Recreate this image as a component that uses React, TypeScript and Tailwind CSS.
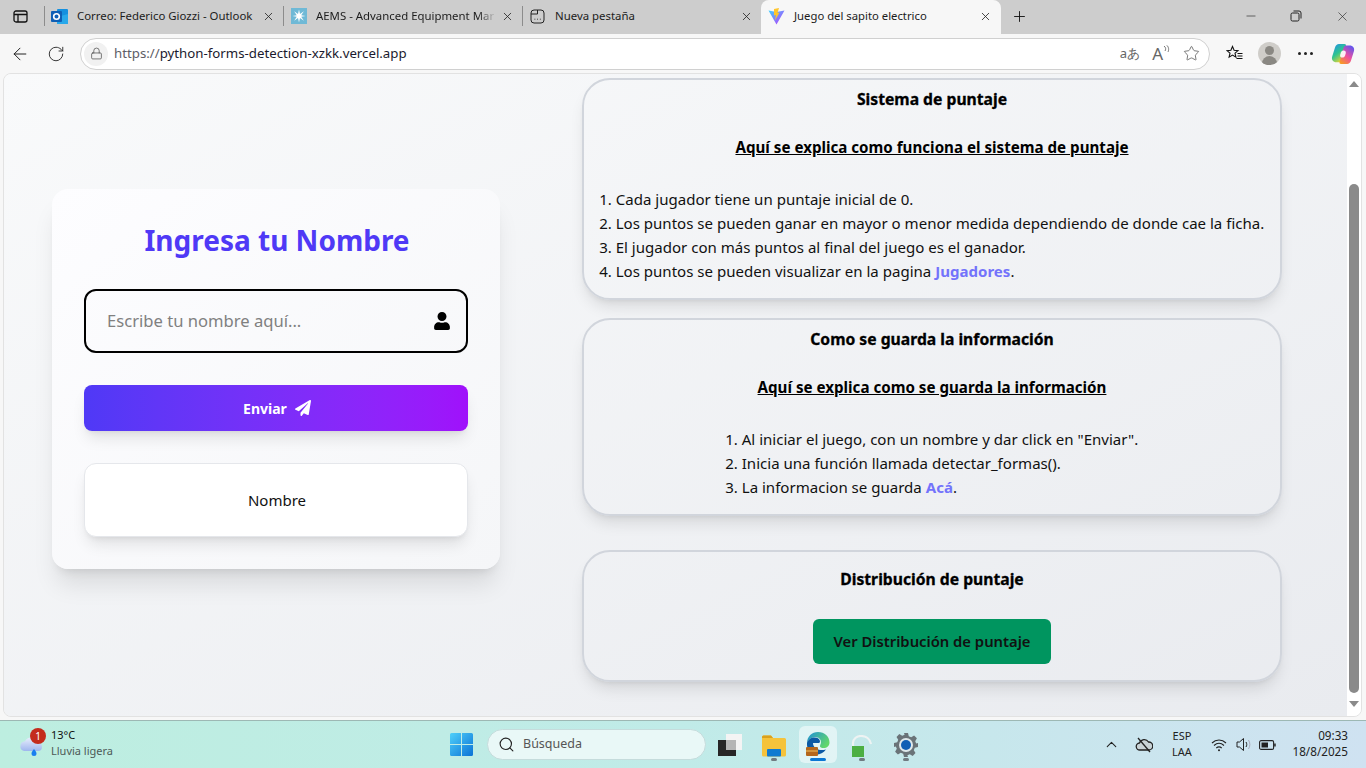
import { ArrowLeft, ChevronUp, Lock, Minus, Plus, RotateCw, Search, Star, X } from "lucide-react";
import { FaPaperPlane, FaUser } from "react-icons/fa";

function OutlookIcon() {
  return (
    <svg width="17" height="17" viewBox="0 0 17 17" className="shrink-0">
      <rect x="6" y="1" width="11" height="15" rx="1" fill="#1490df" />
      <path d="M6 9l11-3v10H6z" fill="#28a8ea" />
      <rect x="0" y="3" width="11" height="11" rx="1" fill="#0f5fb5" />
      <circle cx="5.5" cy="8.5" r="2.8" fill="none" stroke="#fff" strokeWidth="1.6" />
    </svg>
  );
}

function AemsIcon() {
  return (
    <svg width="16" height="16" viewBox="0 0 16 16" className="shrink-0">
      <rect width="16" height="16" fill="#6fb9d6" />
      <path d="M8 1.5l1 4.6 3.9-2.8-2.7 3.9 4.3.8-4.3.8 2.7 3.9L9 9.9l-1 4.6-1-4.6-3.9 2.8 2.7-3.9-4.3-.8 4.3-.8-2.7-3.9L7 6.1z" fill="#fff" />
    </svg>
  );
}

function NewTabIcon() {
  return (
    <svg width="15" height="15" viewBox="0 0 15 15" fill="none" stroke="#222" strokeWidth="1" className="shrink-0">
      <rect x="1" y="1" width="13" height="13" rx="3" />
      <path d="M1 5h6.5V1M4.5 10.2h.8M7.2 10.2h.8M9.900 10.2h.8" />
    </svg>
  );
}

function ViteIcon() {
  return (
    <svg width="17" height="17" viewBox="0 0 17 17" className="shrink-0">
      <defs>
        <linearGradient id="viteTri" x1="0" y1="0" x2="1" y2="1">
          <stop offset="0" stopColor="#41d1ff" />
          <stop offset="1" stopColor="#bd34fe" />
        </linearGradient>
      </defs>
      <path d="M0.5 2.5L8.5 4l8-1.500-8 14z" fill="url(#viteTri)" />
      <path d="M6 1l5-1-1.500 5 2-.5-4.500 8 1-5.500-2 .4z" fill="#ffc62e" />
    </svg>
  );
}

function Tab({ icon, title, fade }: { icon: React.ReactNode; title: string; fade?: boolean }) {
  return (
    <div className="flex h-full w-[238px] shrink-0 items-center pb-[2px] pl-[6px] pr-[8px]">
      <div className="flex w-[17px] shrink-0 justify-center">{icon}</div>
      <span
        className={`ml-[9px] min-w-0 flex-1 whitespace-nowrap text-[11.400px] text-[#1c1c1c] ${
          fade ? "[mask-image:linear-gradient(90deg,#000_90%,transparent)]" : ""
        }`}
      >
        {title}
      </span>
      <X size={13} strokeWidth={1.5} className="ml-[5px] shrink-0 text-[#222]" />
    </div>
  );
}

function Separator() {
  return <div className="-mt-[2px] h-[20px] w-px shrink-0 bg-[#8c8c8c]" />;
}

function TabBar() {
  return (
    <div className="flex h-[34px] shrink-0 items-center bg-[#cdcdcd] pl-[13px]">
      <svg width="15" height="15" viewBox="0 0 15 15" fill="none" stroke="#111" strokeWidth="1.300" className="-mt-[2px] mr-[16px] shrink-0">
        <rect x="1" y="2" width="13" height="11" rx="2" />
        <path d="M1 5.500h13M5 5.500V13" />
      </svg>
      <Separator />
      <Tab icon={<OutlookIcon />} title="Correo: Federico Giozzi - Outlook" />
      <Separator />
      <Tab icon={<AemsIcon />} title="AEMS - Advanced Equipment Mar" fade />
      <Separator />
      <Tab icon={<NewTabIcon />} title="Nueva pestaña" />
      <div className="flex h-full w-[240px] shrink-0 items-center rounded-t-lg bg-[#f7f7f7] pb-[2px] pl-[7px] pr-[9px]">
        <ViteIcon />
        <span className="ml-[9px] whitespace-nowrap text-[11.300px] text-[#1c1c1c]">Juego del sapito electrico</span>
        <X size={13} strokeWidth={1.5} className="ml-auto shrink-0 text-[#222]" />
      </div>
      <Plus size={17} strokeWidth={1.3} className="-mt-[2px] ml-[10px] shrink-0 text-[#111]" />
      <div className="-mt-[2px] ml-auto flex items-center">
        <Minus size={14} strokeWidth={1.1} className="text-[#222]" />
        <svg width="12" height="12" viewBox="0 0 12 12" fill="none" stroke="#222" className="ml-[32px]">
          <rect x="1" y="3" width="8" height="8" rx="1.5" />
          <path d="M3.500 1h5.500a2 2 0 0 1 2 2v5.500" />
        </svg>
        <X size={15} strokeWidth={1} className="ml-[33px] mr-[16px] text-[#222]" />
      </div>
    </div>
  );
}

function CopilotIcon() {
  return (
    <svg width="24" height="24" viewBox="0 0 24 24">
      <defs>
        <linearGradient id="copA" x1="0" y1="0" x2="0.6" y2="1">
          <stop offset="0" stopColor="#1f8cf0" />
          <stop offset="0.55" stopColor="#2fc48f" />
          <stop offset="1" stopColor="#e8d534" />
        </linearGradient>
        <linearGradient id="copB" x1="0.2" y1="1" x2="0.8" y2="0">
          <stop offset="0" stopColor="#f79a25" />
          <stop offset="0.45" stopColor="#ee4f9f" />
          <stop offset="1" stopColor="#5e55ef" />
        </linearGradient>
      </defs>
      <path d="M8 2h5.500c1.200 0 1.800.8 1.400 2L11.500 18c-.4 1.500-1.400 2.200-2.800 2.200H5.500C2 20.200.2 17.600 1.200 14.400L4 5.500C4.700 3.300 6 2 8 2z" fill="url(#copA)" />
      <path d="M15 3.500h3.500c3.500 0 5.400 2.600 4.400 5.800L20 18.500c-.7 2.200-2 3.500-4 3.500H10c-1.200 0-1.800-.8-1.400-2L12.500 6c.4-1.600 1.200-2.500 2.500-2.500z" fill="url(#copB)" />
      <path d="M12.500 8.500c1.800 0 2.700 1.200 2.200 2.900l-.7 2.300c-.4 1.100-1.300 1.900-2.600 1.900-1.800 0-2.700-1.200-2.200-2.900l.7-2.300c.4-1.100 1.300-1.900 2.600-1.900z" fill="#fff" opacity="0.9" />
    </svg>
  );
}

function Toolbar() {
  return (
    <div className="flex h-[39px] shrink-0 items-center bg-[#f7f7f7] pl-[10px]">
      <ArrowLeft size={20} strokeWidth={1.2} className="shrink-0 text-[#222]" />
      <RotateCw size={18} strokeWidth={1.2} className="ml-[17px] shrink-0 text-[#222]" />
      <div className="ml-[15px] flex h-[32px] w-[1130px] shrink-0 items-center rounded-full border border-[#d0d0d0] bg-white pl-[3px] pr-[9px]">
        <div className="flex h-[24px] w-[24px] items-center justify-center rounded-full bg-[#f1f1f1]">
          <Lock size={13} strokeWidth={1.3} className="text-[#444]" />
        </div>
        <span className="ml-[6px] pt-[1px] text-[13.250px] text-[#1a1a2e]">
          <span className="text-[#5d5d66]">https://</span>python-forms-detection-xzkk.vercel.app
        </span>
        <span className="ml-auto text-[13px] text-[#666]">aあ</span>
        <span className="ml-[12px] flex items-start text-[17px] leading-none text-[#666]">
          A
          <svg width="7" height="10" viewBox="0 0 7 10" fill="none" stroke="#666" strokeWidth="0.9">
            <path d="M1 1c2 1.500 2 3.500 1 5M3.500 0c2.500 2 2.500 5 1.500 7" />
          </svg>
        </span>
        <Star size={17} strokeWidth={1.1} className="ml-[13px] text-[#555]" />
      </div>
      <svg width="18" height="18" viewBox="0 0 18 18" fill="none" stroke="#111" strokeWidth="1.100" className="ml-[16px] shrink-0">
        <path d="M6.500 1.500l1.600 3.700 3.900.4-3 2.600.9 3.900-3.400-2-3.400 2 .9-3.900-3-2.600 3.900-.4z" />
        <path d="M11.500 8.500h5M11.500 11h5M10.500 13.500h6" />
      </svg>
      <div className="ml-[14px] flex h-[23px] w-[23px] shrink-0 flex-col items-center overflow-hidden rounded-full bg-[#cfcdc9]">
        <div className="mt-[4px] h-[9px] w-[9px] rounded-full bg-[#8a8883]" />
        <div className="mt-[1px] h-[10px] w-[15px] rounded-t-full bg-[#8a8883]" />
      </div>
      <div className="ml-[17px] flex shrink-0 gap-[3px]">
        <div className="h-[3px] w-[3px] rounded-full bg-[#222]" />
        <div className="h-[3px] w-[3px] rounded-full bg-[#222]" />
        <div className="h-[3px] w-[3px] rounded-full bg-[#222]" />
      </div>
      <div className="ml-[18px] shrink-0">
        <CopilotIcon />
      </div>
    </div>
  );
}

function InfoCard({ title, subtitle, children }: { title: string; subtitle: string; children: React.ReactNode }) {
  return (
    <section className="flex flex-col items-center rounded-[28px] border-2 border-[#d1d5dc] px-3 pb-[15px] pt-[7px] shadow-lg">
      <h3 className="text-[15.700px] font-bold leading-6 text-black [-webkit-text-stroke:0.3px_#000]">{title}</h3>
      <h4 className="mt-6 text-[15.150px] font-bold leading-6 text-black underline">{subtitle}</h4>
      <ol className="mt-7 list-decimal pl-4 text-[15.050px] leading-6 text-[#111]">{children}</ol>
    </section>
  );
}

function LoginCard() {
  return (
    <div className="flex h-[380px] w-[448px] shrink-0 flex-col rounded-2xl bg-gradient-to-br from-[#fdfdff] to-[#f5f6f8] p-8 shadow-xl">
      <h2 className="mt-[1px] pl-[2px] text-center text-[28px] font-bold leading-9 text-[#4f39f6]">Ingresa tu Nombre</h2>
      <div className="mt-[31px] flex h-[64px] items-center rounded-xl border-2 border-black pl-[21px] pr-[15px]">
        <span className="text-[16.600px] text-[#808080]">Escribe tu nombre aquí...</span>
        <FaUser size={18} className="ml-auto text-black" />
      </div>
      <button className="mt-8 flex h-[46px] items-center justify-center gap-2 rounded-lg bg-gradient-to-r from-[#4f39f6] to-[#a010fb] pl-[2px] text-[14px] font-bold text-white shadow-lg">
        Enviar
        <FaPaperPlane size={16} />
      </button>
      <div className="mt-8 flex h-[74px] items-center justify-center rounded-xl border border-[#e5e7eb] bg-white pl-[2px] text-[15px] text-[#111] shadow-lg">
        Nombre
      </div>
    </div>
  );
}

function Scrollbar() {
  return (
    <div className="flex w-[14px] shrink-0 flex-col items-center bg-white">
      <div className="mt-[7px] h-0 w-0 border-x-[5px] border-b-[6px] border-x-transparent border-b-[#8a8a8a]" />
      <div className="mt-[97px] h-[509px] w-[10px] rounded-full bg-[#8a8a8a]" />
      <div className="mt-[8px] h-0 w-0 border-x-[5px] border-t-[6px] border-x-transparent border-t-[#8a8a8a]" />
    </div>
  );
}

function Page() {
  return (
    <div className="flex h-[647px] shrink-0 bg-[#f7f7f7] pb-[3px] pl-[3px] pr-[4px]">
      <div className="flex min-w-0 flex-1 overflow-hidden rounded-lg border border-[#e2e2e2]">
        <main className="flex min-w-0 flex-1 items-start bg-gradient-to-br from-[#f9fafb] to-[#e9ebef] pl-[48px]">
          <div className="mt-[115px] shrink-0">
            <LoginCard />
          </div>
          <div className="ml-[82px] mt-[4px] flex w-[700px] shrink-0 flex-col">
            <InfoCard title="Sistema de puntaje" subtitle="Aquí se explica como funciona el sistema de puntaje">
              <li>Cada jugador tiene un puntaje inicial de 0.</li>
              <li>Los puntos se pueden ganar en mayor o menor medida dependiendo de donde cae la ficha.</li>
              <li>El jugador con más puntos al final del juego es el ganador.</li>
              <li>
                Los puntos se pueden visualizar en la pagina <b className="font-bold text-[#7373fb]">Jugadores</b>.
              </li>
            </InfoCard>
            <div className="mt-[18px]">
              <InfoCard title="Como se guarda la información" subtitle="Aquí se explica como se guarda la información">
                <li>Al iniciar el juego, con un nombre y dar click en "Enviar".</li>
                <li>Inicia una función llamada detectar_formas().</li>
                <li>
                  La informacion se guarda <b className="font-bold text-[#7373fb]">Acá</b>.
                </li>
              </InfoCard>
            </div>
            <section className="mt-[34px] flex h-[132px] flex-col items-center rounded-[28px] border-2 border-[#d1d5dc] pt-[15px] shadow-lg">
              <h3 className="text-[15.700px] font-bold leading-6 text-black [-webkit-text-stroke:0.3px_#000]">Distribución de puntaje</h3>
              <button className="mt-[28px] h-[45px] w-[238px] rounded-md bg-[#00955f] text-[14.800px] font-semibold text-[#111]">
                Ver Distribución de puntaje
              </button>
            </section>
          </div>
        </main>
        <Scrollbar />
      </div>
    </div>
  );
}

function WeatherIcon() {
  return (
    <div className="relative h-[30px] w-[30px] shrink-0">
      <svg width="26" height="24" viewBox="0 0 26 24" className="absolute left-0 top-[5px]">
        <defs>
          <linearGradient id="cloud" x1="0" y1="0" x2="0" y2="1">
            <stop offset="0" stopColor="#e8eefc" />
            <stop offset="1" stopColor="#9fb6ee" />
          </linearGradient>
        </defs>
        <path d="M6 16a5 5 0 0 1 1-9.800 7 7 0 0 1 13 1.800 4 4 0 0 1 0 8z" fill="url(#cloud)" />
        <path d="M16 14c1.500 2 2.500 3.200 2.500 4.500a2.500 2.500 0 0 1-5 0c0-1.300 1-2.500 2.500-4.500z" fill="#1a7ff0" />
      </svg>
      <div className="absolute left-[12px] top-[-2px] flex h-[16px] w-[16px] items-center justify-center rounded-full bg-[#c42b1c] text-[10px] leading-none text-white">
        1
      </div>
    </div>
  );
}

function TaskDot() {
  return <div className="mx-auto mt-[1px] h-[3px] w-[6px] rounded-full bg-[#707a80]" />;
}

function Taskbar() {
  return (
    <div className="flex h-[48px] shrink-0 items-center border-t border-[#9db8b4] bg-gradient-to-r from-[#bdeee0] via-[#c0ebe8] to-[#cfe2f1] pl-[18px]">
      <WeatherIcon />
      <div className="-mt-[3px] ml-[3px] w-[70px] shrink-0 text-[11px] leading-[16px]">
        <div className="text-[#111]">13°C</div>
        <div className="whitespace-nowrap text-[#4d5a58]">Lluvia ligera</div>
      </div>
      <svg width="23" height="23" viewBox="0 0 23 23" className="ml-[329px] shrink-0">
        <defs>
          <linearGradient id="win" x1="0" y1="0" x2="1" y2="1">
            <stop offset="0" stopColor="#4fd0fa" />
            <stop offset="1" stopColor="#0a72d6" />
          </linearGradient>
        </defs>
        <path d="M0 1.500A1.500 1.500 0 0 1 1.500 0H11v11H0zM12 0h9.500A1.500 1.500 0 0 1 23 1.500V11H12zM0 12h11v11H1.500A1.500 1.500 0 0 1 0 21.500zM12 12h11v9.500a1.500 1.500 0 0 1-1.500 1.500H12z" fill="url(#win)" />
      </svg>
      <div className="ml-[14px] flex h-[31px] w-[219px] shrink-0 items-center rounded-full border border-[#c5dcdc] bg-[#e9f8f7] pl-[10px]">
        <Search size={17} strokeWidth={1.6} className="text-[#222]" />
        <span className="ml-[8px] text-[12.500px] text-[#555]">Búsqueda</span>
      </div>
      <div className="ml-[12px] flex h-[24px] w-[24px] shrink-0 flex-col justify-between">
        <svg width="24" height="24" viewBox="0 0 24 24">
          <rect x="8" y="1" width="16" height="16" fill="#f4f4f4" />
          <rect x="0" y="7" width="18" height="16" fill="#262626" />
          <rect x="8" y="7" width="10" height="10" fill="#b5b5b5" />
        </svg>
      </div>
      <div className="ml-[20px] w-[24px] shrink-0 pt-[6px]">
        <svg width="24" height="22" viewBox="0 0 24 22">
          <path d="M0 2a1.500 1.500 0 0 1 1.500-1.500H9l2 2.500h11.500A1.500 1.500 0 0 1 24 4.500V20a1.500 1.500 0 0 1-1.500 1.500h-21A1.500 1.500 0 0 1 0 20z" fill="#f5c33b" />
          <path d="M0 2a1.500 1.500 0 0 1 1.500-1.500H9l2 2.500H0z" fill="#d9a11f" />
          <rect x="5" y="14" width="14" height="7.500" rx="1" fill="#0f7bd1" />
        </svg>
        <TaskDot />
      </div>
      <div className="ml-[13px] flex h-[37px] w-[38px] shrink-0 flex-col items-center rounded-md bg-white/50 pt-[5px]">
        <svg width="26" height="26" viewBox="0 0 26 26">
          <defs>
            <linearGradient id="edgeA" x1="0" y1="0" x2="1" y2="0.6">
              <stop offset="0" stopColor="#1e8fd8" />
              <stop offset="1" stopColor="#62d86a" />
            </linearGradient>
          </defs>
          <path d="M2 12C2 5.500 7 1 13 1c6.500 0 11.500 4.500 11.500 10.500 0 3.500-2.500 5.500-6 5.500-2 0-3.500-.7-3.500-1.800 0-1.800 1-2 1-4 0-3-2.500-5.200-6-5.200C6 6.500 3 9 2 12z" fill="url(#edgeA)" />
          <path d="M2 12c1-3.500 4-5.500 8-5.500 3 0 5 1.800 5 4 0 .8-.6 1.500-1.500 1.500H8c0 5 5.500 8.500 13 6.500-2.500 3.500-6 5-9.500 5C5.500 23.500 1.500 18.500 2 12z" fill="#0c59a4" />
          <rect x="1" y="16" width="12" height="9" rx="1" fill="#b3661c" />
          <rect x="1" y="19.500" width="12" height="1" fill="#f0c060" />
        </svg>
        <div className="mt-[1px] h-[3px] w-[16px] rounded-full bg-[#0a78d4]" />
      </div>
      <div className="ml-[13px] w-[24px] shrink-0 pt-[6px]">
        <svg width="24" height="22" viewBox="0 0 24 22" fill="none">
          <path d="M3 11V8c0-4 3.500-7 8-7 5 0 9 3 10 8" stroke="#eef3f3" strokeWidth="2.200" />
          <rect x="2" y="11" width="12" height="11" fill="#4caf43" />
        </svg>
        <TaskDot />
      </div>
      <div className="ml-[20px] w-[24px] shrink-0 pt-[5px]">
        <svg width="24" height="24" viewBox="0 0 24 24">
          <path d="M10 0h4l.8 3.200 2.400 1 2.900-1.700 2.800 2.800-1.700 2.900 1 2.400L24 10v4l-3.200.8-1 2.400 1.700 2.900-2.800 2.800-2.900-1.700-2.400 1L14 24h-4l-.8-3.200-2.400-1-2.900 1.700-2.800-2.800 1.700-2.900-1-2.400L0 14v-4l3.200-.8 1-2.400-1.700-2.900 2.800-2.800 2.900 1.700 2.400-1z" fill="#6a7378" />
          <circle cx="12" cy="12" r="7" fill="#dfe9ec" />
          <circle cx="12" cy="12" r="5" fill="#0f5fb5" />
        </svg>
        <TaskDot />
      </div>
      <ChevronUp size={17} strokeWidth={1.5} className="ml-[185px] shrink-0 text-[#222]" />
      <svg width="18" height="16" viewBox="0 0 18 16" fill="none" stroke="#222" strokeWidth="1.300" className="ml-[15px] shrink-0">
        <path d="M5 13a3.500 3.500 0 0 1-.5-7A5 5 0 0 1 13.500 5a4 4 0 0 1 .5 8z" fill="#c9d3d6" />
        <path d="M3 1l12 14" />
      </svg>
      <div className="-mt-[1px] ml-[17px] w-[24px] shrink-0 text-center text-[11px] leading-[16px] text-[#222]">
        <div>ESP</div>
        <div>LAA</div>
      </div>
      <svg width="16" height="14" viewBox="0 0 16 14" fill="none" stroke="#222" strokeWidth="1.100" className="ml-[17px] shrink-0">
        <path d="M1 5c4-4 10-4 14 0M3 7.500c3-2.700 7-2.700 10 0M5.300 10c1.600-1.300 3.800-1.300 5.400 0" />
        <circle cx="8" cy="12.300" r="1" fill="#222" stroke="none" />
      </svg>
      <svg width="16" height="15" viewBox="0 0 16 15" fill="none" stroke="#222" className="ml-[9px] shrink-0">
        <path d="M1 5h2.500L7.500 1.500v12L3.500 10H1z" />
        <path d="M10 5c1 1.500 1 3.500 0 5" />
        <path d="M12.500 3c1.800 2.800 1.800 6.200 0 9" stroke="#aab" />
      </svg>
      <svg width="17" height="10" viewBox="0 0 17 10" className="ml-[7px] shrink-0">
        <rect x="0.600" y="0.600" width="14" height="8.800" rx="1.500" fill="none" stroke="#222" strokeWidth="1.100" />
        <rect x="2.500" y="2.500" width="6.500" height="5" fill="#222" />
        <rect x="15.200" y="3.500" width="1.500" height="3" fill="#222" />
      </svg>
      <div className="-mt-[3px] ml-[12px] w-[60px] shrink-0 text-right text-[11.700px] leading-[16px] text-[#222]">
        <div>09:33</div>
        <div>18/8/2025</div>
      </div>
    </div>
  );
}

export default function App() {
  return (
    <div className="flex h-[768px] w-[1366px] flex-col overflow-hidden bg-[#f7f7f7] font-['Noto_Sans',sans-serif]">
      <TabBar />
      <Toolbar />
      <Page />
      <Taskbar />
    </div>
  );
}
